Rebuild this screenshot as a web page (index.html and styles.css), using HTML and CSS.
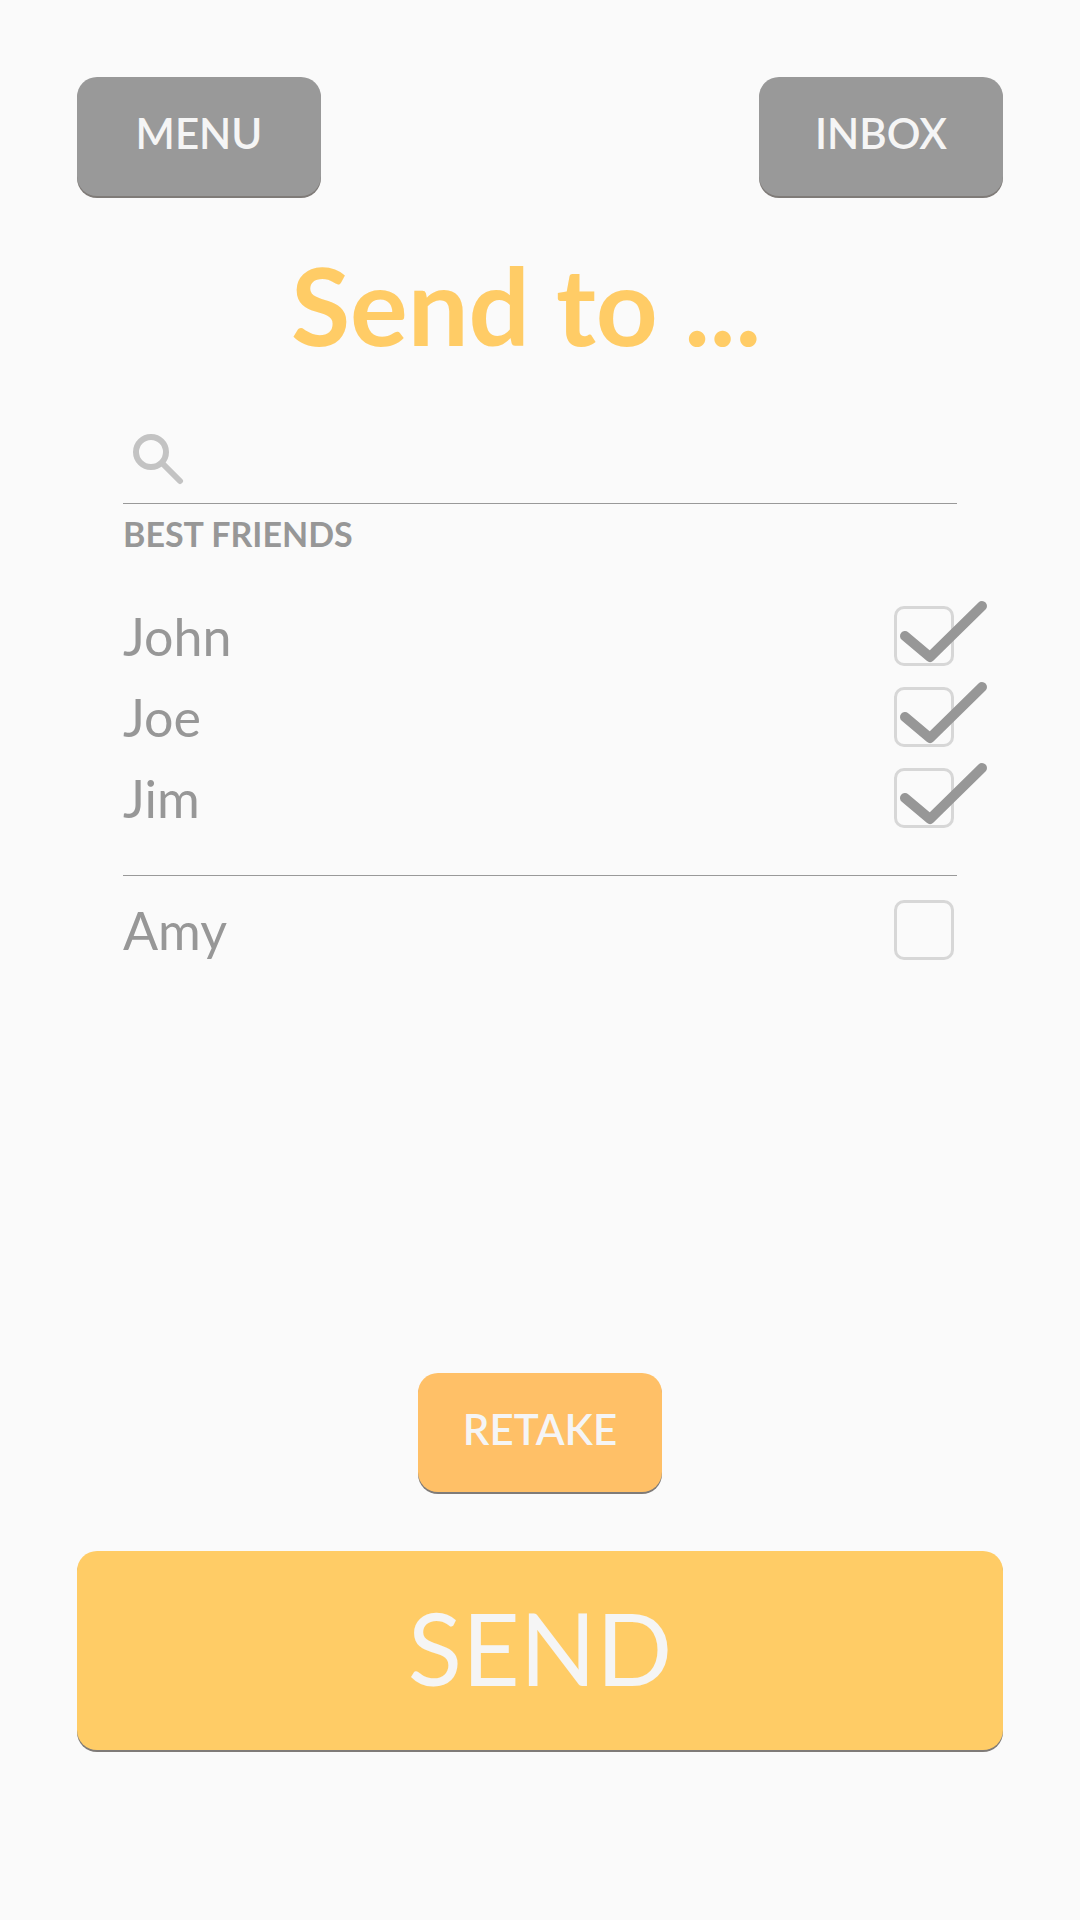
FILE: index.html
```html
<!DOCTYPE html>
<html lang="en">
<head>
<meta charset="utf-8">
<meta name="viewport" content="width=device-width, initial-scale=1">
<title>Send to</title>
<link rel="stylesheet" href="styles.css">
</head>
<body>
<main class="screen">
  <nav class="topbar">
    <button class="button button-gray" type="button">MENU</button>
    <button class="button button-gray" type="button">INBOX</button>
  </nav>
  <h1 class="title">Send to ...</h1>
  <form class="recipients">
    <div class="search">
      <label for="search">
        <svg class="search-icon" viewBox="0 0 52 52" role="img" aria-label="Search">
          <circle cx="19" cy="19" r="15"/>
          <path d="M31 31L48 48"/>
        </svg>
      </label>
      <input class="search-input" id="search" type="search">
    </div>
    <h2 class="group-title">BEST FRIENDS</h2>
    <ul class="friends">
      <li class="friend">
        <label class="name" for="john">John</label>
        <span class="check"><input class="box" id="john" type="checkbox" checked><svg class="tick" viewBox="0 0 96 68"><path d="M11 38L36 59L88 8"/></svg></span>
      </li>
      <li class="friend">
        <label class="name" for="joe">Joe</label>
        <span class="check"><input class="box" id="joe" type="checkbox" checked><svg class="tick" viewBox="0 0 96 68"><path d="M11 38L36 59L88 8"/></svg></span>
      </li>
      <li class="friend">
        <label class="name" for="jim">Jim</label>
        <span class="check"><input class="box" id="jim" type="checkbox" checked><svg class="tick" viewBox="0 0 96 68"><path d="M11 38L36 59L88 8"/></svg></span>
      </li>
    </ul>
    <ul class="friends friends-other">
      <li class="friend">
        <label class="name" for="amy">Amy</label>
        <span class="check"><input class="box" id="amy" type="checkbox"><svg class="tick" viewBox="0 0 96 68"><path d="M11 38L36 59L88 8"/></svg></span>
      </li>
    </ul>
  </form>
  <footer class="actions">
    <button class="button button-retake" type="button">RETAKE</button>
    <button class="button button-send" type="button">SEND</button>
  </footer>
</main>
</body>
</html>
```
FILE: styles.css
```css
* {
  box-sizing: border-box;
}

body {
  margin: 0;
  background: #fafafa;
  color: #979797;
  font-family: Lato, "Open Sans", sans-serif;
}

.screen {
  display: flex;
  flex-direction: column;
  min-height: 100vh;
  padding: 77px 77px 170px;
}

.topbar {
  display: flex;
  justify-content: space-between;
}

.button {
  width: 244px;
  height: 119px;
  padding: 0 0 8px;
  border: 0;
  border-radius: 20px;
  box-shadow: 0 2px 0 #7f7b78;
  color: #f5f5f5;
  font: 600 42px/48px Lato, "Open Sans", sans-serif;
}

.button-gray {
  background: #999;
}

.button-retake {
  background: #ffc067;
}

.button-send {
  width: 100%;
  height: 199px;
  background: #fc6;
  font-size: 100px;
  font-weight: 400;
  line-height: 120px;
}

.title {
  margin: 48px 0 0;
  padding-right: 28px;
  color: #fc6;
  font-size: 108px;
  font-weight: 700;
  line-height: 120px;
  text-align: center;
}

.recipients {
  margin: 56px 46px 0;
}

.search {
  display: flex;
  align-items: center;
  gap: 12px;
  height: 84px;
  padding-left: 9px;
  border-bottom: 1px solid #999;
}

.search-icon {
  display: block;
  width: 52px;
  height: 52px;
  margin-bottom: 6px;
  fill: none;
  stroke: #c3c3c3;
  stroke-width: 6;
  stroke-linecap: round;
}

.search-input {
  flex: 1;
  min-width: 0;
  height: 60px;
  border: 0;
  outline: 0;
  background: transparent;
  color: inherit;
  font: 400 52px/60px Lato, "Open Sans", sans-serif;
}

.group-title {
  margin: 8px 0 50px;
  font-size: 34px;
  font-weight: 700;
  line-height: 44px;
}

.friends {
  display: grid;
  gap: 21px;
  margin: 0;
  padding: 0;
  list-style: none;
}

.friends-other {
  margin-top: 47px;
  padding-top: 24px;
  border-top: 1px solid #999;
}

.friend {
  display: flex;
  align-items: center;
  justify-content: space-between;
  padding-right: 3px;
}

.name {
  font-size: 52px;
  line-height: 60px;
}

.check {
  position: relative;
  width: 60px;
  height: 60px;
}

.box {
  display: block;
  width: 60px;
  height: 60px;
  margin: 0;
  border: 3px solid #d7d7d7;
  border-radius: 10px;
  appearance: none;
}

.tick {
  display: none;
  position: absolute;
  left: 0;
  bottom: 0;
  width: 96px;
  height: 68px;
  fill: none;
  stroke: #979797;
  stroke-width: 10;
  stroke-linecap: round;
  stroke-linejoin: round;
  pointer-events: none;
}

.box:checked + .tick {
  display: block;
}

.actions {
  display: flex;
  flex-direction: column;
  align-items: center;
  gap: 59px;
  margin-top: auto;
}
```
